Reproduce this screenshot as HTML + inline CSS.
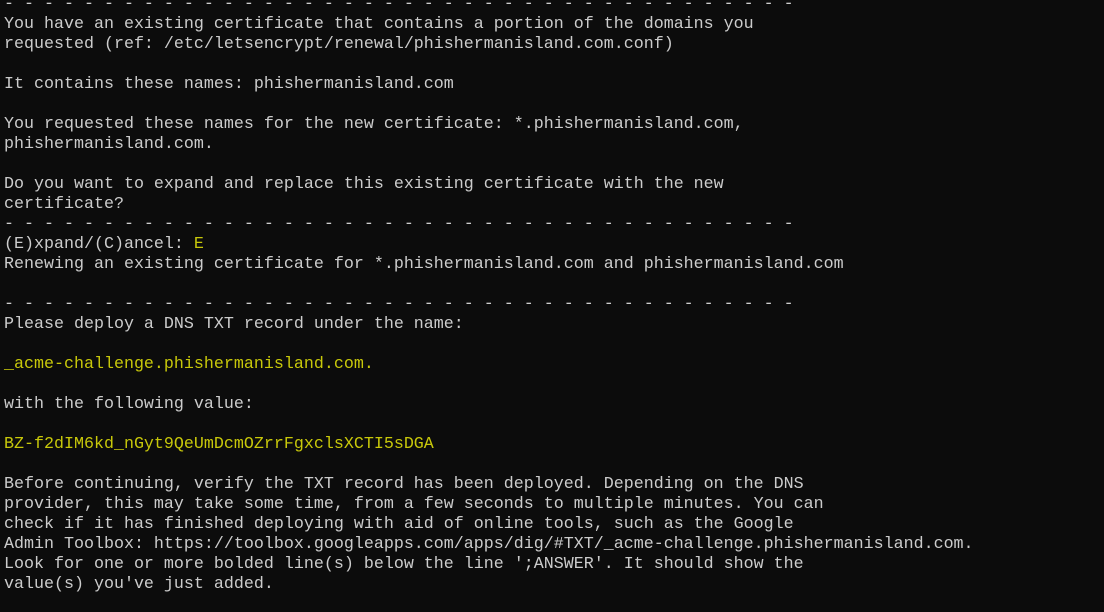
<!DOCTYPE html>
<html><head><meta charset="utf-8"><style>
html,body{margin:0;padding:0;background:#0c0c0c;width:1104px;height:612px;overflow:hidden}
pre{margin:0;position:absolute;left:4px;top:-5px;font-family:"Liberation Mono","DejaVu Sans Mono",monospace;font-size:16.67px;line-height:20px;color:#cccccc;white-space:pre}
.y{color:#c8c80a}
</style></head><body><pre>- - - - - - - - - - - - - - - - - - - - - - - - - - - - - - - - - - - - - - - -
You have an existing certificate that contains a portion of the domains you
requested (ref: /etc/letsencrypt/renewal/phishermanisland.com.conf)

It contains these names: phishermanisland.com

You requested these names for the new certificate: *.phishermanisland.com,
phishermanisland.com.

Do you want to expand and replace this existing certificate with the new
certificate?
- - - - - - - - - - - - - - - - - - - - - - - - - - - - - - - - - - - - - - - -
(E)xpand/(C)ancel: <span class="y">E</span>
Renewing an existing certificate for *.phishermanisland.com and phishermanisland.com

- - - - - - - - - - - - - - - - - - - - - - - - - - - - - - - - - - - - - - - -
Please deploy a DNS TXT record under the name:

<span class="y">_acme-challenge.phishermanisland.com.</span>

with the following value:

<span class="y">BZ-f2dIM6kd_nGyt9QeUmDcmOZrrFgxclsXCTI5sDGA</span>

Before continuing, verify the TXT record has been deployed. Depending on the DNS
provider, this may take some time, from a few seconds to multiple minutes. You can
check if it has finished deploying with aid of online tools, such as the Google
Admin Toolbox: https://toolbox.googleapps.com/apps/dig/#TXT/_acme-challenge.phishermanisland.com.
Look for one or more bolded line(s) below the line ';ANSWER'. It should show the
value(s) you've just added.
</pre></body></html>
